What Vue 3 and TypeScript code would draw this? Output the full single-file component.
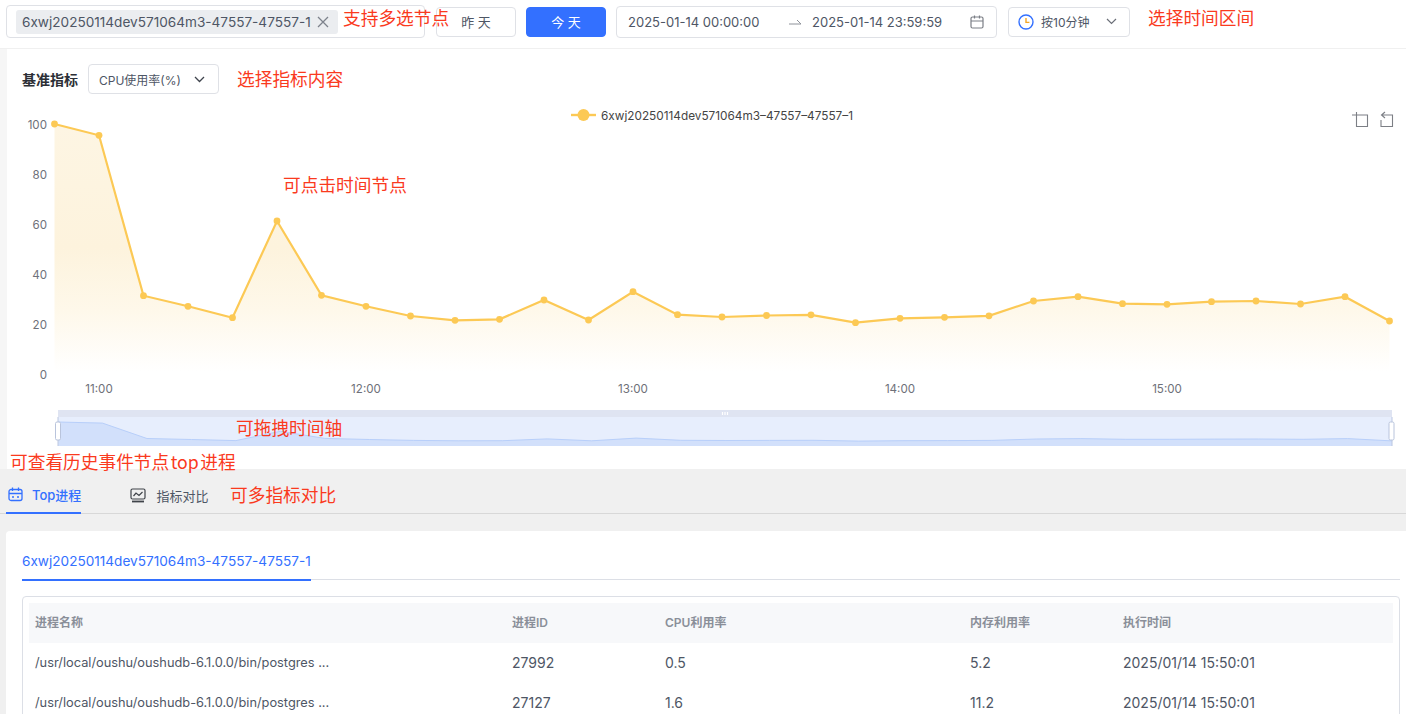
<script setup lang="ts">
const ys: number[] = [124, 135.3, 295.7, 306.3, 317.7, 221, 295.3, 306.3, 316, 320.3, 319.3, 300, 320, 291.7, 314.7, 317, 315.5, 314.8, 322.7, 318.3, 317.3, 315.8, 301, 296.7, 303.7, 304.3, 301.7, 301, 304, 296.7, 321]
const xAt = (i: number): number => 54.5 + i * 44.5
const points = ys.map((y, i) => ({ x: xAt(i), y }))
const linePath = points.map((p, i) => `${i ? 'L' : 'M'}${p.x} ${p.y}`).join(' ')
const areaPath = `${linePath} L${xAt(30)} 374 L${xAt(0)} 374 Z`

const sx = (i: number): number => 58 + i * 44.47
const sy = (y: number): number => 446 - ((374 - y) / 2.5) * 0.24
const miniLine = ys.map((y, i) => `${i ? 'L' : 'M'}${sx(i)} ${sy(y).toFixed(1)}`).join(' ')
const miniArea = `${miniLine} L${sx(30)} 446 L${sx(0)} 446 Z`

const yLabels = [
  { t: '100', y: 124 }, { t: '80', y: 174 }, { t: '60', y: 224 },
  { t: '40', y: 274 }, { t: '20', y: 324 }, { t: '0', y: 374 },
]
const xLabels = [
  { t: '11:00', x: 99 }, { t: '12:00', x: 366 }, { t: '13:00', x: 633 },
  { t: '14:00', x: 900 }, { t: '15:00', x: 1167 },
]
const nodeName = '6xwj20250114dev571064m3-47557-47557-1'
const rows = [
  { name: '/usr/local/oushu/oushudb-6.1.0.0/bin/postgres ...', pid: '27992', cpu: '0.5', mem: '5.2', time: '2025/01/14 15:50:01' },
  { name: '/usr/local/oushu/oushudb-6.1.0.0/bin/postgres ...', pid: '27127', cpu: '1.6', mem: '11.2', time: '2025/01/14 15:50:01' },
]
</script>

<template>
  <div class="page">
    <header class="topbar">
      <div class="node-select">
        <span class="tag">
          <span>{{ nodeName }}</span>
          <svg class="tag-x" width="12" height="12" viewBox="0 0 12 12"><path d="M1 1L11 11M11 1L1 11" stroke="#7d828c" stroke-width="1.3" fill="none" /></svg>
        </span>
      </div>
      <button class="day-btn">昨 天</button>
      <button class="day-btn active">今 天</button>
      <div class="range">
        <span class="range-start">2025-01-14 00:00:00</span>
        <svg class="range-arrow" width="13" height="6" viewBox="0 0 13 6"><path d="M0 5H12L8 1" stroke="#8e929a" stroke-width="1" fill="none" /></svg>
        <span class="range-end">2025-01-14 23:59:59</span>
        <svg class="cal" width="14" height="14" viewBox="0 0 14 14" fill="none" stroke="#7b7e85" stroke-width="1.2"><rect x="1" y="2" width="12" height="11" rx="1.5" /><path d="M1 6H13M4.5 .5V3.5M9.5 .5V3.5" /></svg>
      </div>
      <div class="interval">
        <svg width="16" height="16" viewBox="0 0 16 16" fill="none"><circle cx="8" cy="8" r="7" stroke="#3370ff" stroke-width="1.4" /><path d="M8 4V8.4H11.4" stroke="#f5a623" stroke-width="1.4" /></svg>
        <span class="interval-text">按10分钟</span>
        <svg class="chev" width="11" height="7" viewBox="0 0 11 7"><path d="M1 1L5.5 5.5L10 1" stroke="#6b6f78" stroke-width="1.2" fill="none" /></svg>
      </div>
    </header>

    <section class="chart-wrap">
      <div class="chart-card">
        <div class="metric-row">
          <span class="metric-label">基准指标</span>
          <div class="metric-select">
            <span>CPU使用率(%)</span>
            <svg width="11" height="7" viewBox="0 0 11 7"><path d="M1 1L5.5 5.5L10 1" stroke="#3f444d" stroke-width="1.3" fill="none" /></svg>
          </div>
        </div>
        <svg class="chart" width="1399" height="369" viewBox="7 100 1399 369">
          <defs>
            <linearGradient id="areaFill" gradientUnits="userSpaceOnUse" x1="0" y1="124" x2="0" y2="372">
              <stop offset="0" stop-color="#fdf5e3" />
              <stop offset="0.5" stop-color="#fdf3dd" />
              <stop offset="0.75" stop-color="#fef8ea" />
              <stop offset="1" stop-color="#ffffff" />
            </linearGradient>
          </defs>
          <path :d="areaPath" fill="url(#areaFill)" />
          <path :d="linePath" fill="none" stroke="#fcc955" stroke-width="2.2" />
          <circle v-for="(p, i) in points" :key="i" :cx="p.x" :cy="p.y" r="3.4" fill="#fcc955" />
          <text v-for="l in yLabels" :key="l.t" class="axis" x="47" :y="l.y + 4.5" text-anchor="end">{{ l.t }}</text>
          <text v-for="l in xLabels" :key="l.t" class="axis" :x="l.x" y="392.5" text-anchor="middle">{{ l.t }}</text>

          <path d="M571 115H596" stroke="#fcc955" stroke-width="2.4" />
          <circle cx="583.5" cy="115" r="6" fill="#fcc955" />
          <text class="legend" x="601" y="119.5">6xwj20250114dev571064m3–47557–47557–1</text>

          <g fill="none" stroke="#7c7f85" stroke-width="1.1">
            <path d="M1356.5 112V126.5H1367.5V115H1352" />
            <path d="M1381 120V126.5H1392.5V115H1382M1385 112L1381.500 115L1385 118" />
          </g>

          <rect x="58" y="410" width="1334" height="36" fill="#e7eefd" />
          <rect x="58" y="410" width="1334" height="7" fill="#dfe4f2" />
          <path :d="miniArea" fill="#d2e0fb" />
          <path :d="miniLine" fill="none" stroke="#b8cffa" stroke-width="1" />
          <path d="M58 417V446M1392 417V446" stroke="#bcc7e0" stroke-width="1" />
          <rect x="55.500" y="422" width="5" height="18" rx="1.500" fill="#fff" stroke="#b9c4dc" />
          <rect x="1389" y="422" width="5" height="18" rx="1.500" fill="#fff" stroke="#b9c4dc" />
          <path d="M722.500 412V415M725 412V415M727.500 412V415" stroke="#fff" stroke-width="1.200" />
        </svg>
      </div>
    </section>

    <nav class="tabs">
      <div class="tab on">
        <svg width="15" height="15" viewBox="0 0 15 15" fill="none" stroke="#3370ff" stroke-width="1.300"><rect x="1" y="2.500" width="13" height="11" rx="2" /><path d="M1 6.500H14M4.500 .5V4M10.500 .5V4M4 10H6M9 10H11" /></svg>
        <span>Top进程</span>
      </div>
      <div class="tab">
        <svg width="16" height="15" viewBox="0 0 16 15" fill="none" stroke="#3f4349" stroke-width="1.200"><rect x="1" y="1" width="14" height="10" rx="1.500" /><path d="M3.500 8L6 5L9 7.500L12.500 4" /><path d="M2 13.500H14" stroke-width="1.800" /></svg>
        <span>指标对比</span>
      </div>
    </nav>

    <section class="detail-card">
      <div class="node-tabs">
        <span class="node-tab">{{ nodeName }}</span>
      </div>
      <div class="table">
        <div class="row head">
          <span>进程名称</span><span>进程ID</span><span>CPU利用率</span><span>内存利用率</span><span>执行时间</span>
        </div>
        <div v-for="(r, i) in rows" :key="i" class="row">
          <span class="proc-name">{{ r.name }}</span><span>{{ r.pid }}</span><span>{{ r.cpu }}</span><span>{{ r.mem }}</span><span>{{ r.time }}</span>
        </div>
      </div>
    </section>

    <span class="note n1">支持多选节点</span>
    <span class="note n2">选择时间区间</span>
    <span class="note n3">选择指标内容</span>
    <span class="note n4">可点击时间节点</span>
    <span class="note n5">可拖拽时间轴</span>
    <span class="note n6">可查看历史事件节点 top 进程</span>
    <span class="note n7">可多指标对比</span>
  </div>
</template>

<style>
html, body { margin: 0; background: #f0f0f0; }
</style>

<style scoped>
.page {
  position: relative;
  width: 1406px;
  height: 714px;
  overflow: hidden;
  background: #f0f0f0;
  font-family: Inter, "Noto Sans CJK SC", sans-serif;
  color: #4e5665;
}
.topbar {
  display: flex;
  align-items: center;
  height: 48px;
  box-sizing: border-box;
  padding: 0 0 5px 6px;
  background: #fff;
}
.node-select {
  display: flex;
  align-items: center;
  box-sizing: border-box;
  width: 419px;
  height: 33px;
  padding-left: 9px;
  border: 1px solid #dfe1e6;
  border-radius: 4px;
}
.tag {
  display: flex;
  align-items: center;
  gap: 6px;
  height: 24px;
  box-sizing: border-box;
  width: 322px;
  padding-left: 6px;
  background: #ebedf0;
  border-radius: 3px;
  font-size: 13.6px;
  color: #4e5665;
  white-space: nowrap;
}
.tag-x { flex: none; }
.day-btn {
  width: 80px;
  height: 30px;
  margin-left: 11px;
  border: 1px solid #dfe1e6;
  border-radius: 4px;
  background: #fff;
  color: #4e5665;
  font: 13px Inter, "Noto Sans CJK SC", sans-serif;
  padding: 0;
}
.day-btn.active {
  margin-left: 10px;
  background: #3370ff;
  border-color: #3370ff;
  color: #fff;
}
.range {
  display: flex;
  align-items: center;
  box-sizing: border-box;
  width: 381px;
  height: 32px;
  margin-left: 10px;
  padding-left: 11px;
  border: 1px solid #dfe1e6;
  border-radius: 4px;
  font-size: 13px;
  white-space: nowrap;
}
.range-start { width: 161px; }
.range-arrow { flex: none; }
.range-end { margin-left: 10px; width: 158px; }
.cal { flex: none; }
.interval {
  display: flex;
  align-items: center;
  box-sizing: border-box;
  width: 122px;
  height: 30px;
  margin-left: 11px;
  padding-left: 9px;
  border: 1px solid #dfe1e6;
  border-radius: 4px;
  font-size: 12px;
}
.interval-text { margin-left: 7px; white-space: nowrap; width: 65px; }
.chart-wrap {
  padding-left: 7px;
  background: #f6f6f6;
  margin-top: 1px;
}
.chart-card {
  height: 420px;
  background: #fff;
  overflow: hidden;
}
.metric-row {
  display: flex;
  align-items: center;
  height: 30px;
  margin-top: 15px;
  padding-left: 15px;
}
.metric-label {
  width: 66px;
  font-size: 14px;
  font-weight: 700;
  color: #2c2f36;
  white-space: nowrap;
}
.metric-select {
  display: flex;
  align-items: center;
  justify-content: space-between;
  box-sizing: border-box;
  width: 131px;
  height: 30px;
  padding: 0 13px 0 10px;
  border: 1px solid #dfe1e6;
  border-radius: 4px;
  font-size: 12px;
  color: #4e5665;
  white-space: nowrap;
}
.chart { display: block; margin-top: 6px; }
.axis { font-size: 11.6px; fill: #6e7079; }
.legend { font-size: 11.8px; fill: #444; }
.tabs {
  display: flex;
  height: 45px;
  box-sizing: border-box;
  border-bottom: 1px solid #d8d8d8;
  padding-left: 6px;
}
.tab {
  display: flex;
  align-items: center;
  gap: 10px;
  height: 45px;
  box-sizing: border-box;
  padding: 7px 0 0 0;
  margin-left: 49px;
  font-size: 13px;
  color: #4e5665;
  white-space: nowrap;
}
.tab.on {
  margin-left: 0;
  gap: 9px;
  padding-left: 2px;
  color: #3370ff;
  font-weight: 500;
  border-bottom: 2px solid #3370ff;
}
.detail-card {
  margin: 17px 0 0 6px;
  height: 200px;
  box-sizing: border-box;
  padding: 0 6px 0 16px;
  background: #fff;
  border-radius: 4px 0 0 0;
}
.node-tabs {
  display: flex;
  height: 49px;
  box-sizing: border-box;
  border-bottom: 1px solid #dcdfe6;
}
.node-tab {
  display: flex;
  align-items: center;
  height: 50px;
  box-sizing: border-box;
  padding-top: 12px;
  border-bottom: 2px solid #3370ff;
  font-size: 13.6px;
  color: #3370ff;
  white-space: nowrap;
}
.table {
  margin-top: 16px;
  padding: 6px 6px 0;
  border: 1px solid #dcdfe6;
  border-radius: 4px;
}
.row {
  display: grid;
  grid-template-columns: 477px 153px 305px 153px 1fr;
  align-items: center;
  height: 40px;
  box-sizing: border-box;
  padding: 0 0 1px 6px;
  font-size: 14px;
  color: #4e5665;
  white-space: nowrap;
}
.proc-name { font-size: 12.8px; }
.row.head {
  background: #f7f8fa;
  padding-bottom: 3px;
  font-size: 12px;
  font-weight: 600;
  color: #8a8f99;
}
.note {
  position: absolute;
  font-family: "Noto Sans CJK SC", sans-serif;
  font-size: 17.7px;
  line-height: 24px;
  color: #fa3a1e;
  white-space: nowrap;
}
.n1 { left: 343px; top: 5px; }
.n2 { left: 1148px; top: 5px; }
.n3 { left: 237px; top: 66px; }
.n4 { left: 283px; top: 172px; }
.n5 { left: 236px; top: 415px; }
.n6 { left: 10px; top: 449px; word-spacing: -2.5px; }
.n7 { left: 230px; top: 482px; }
</style>
